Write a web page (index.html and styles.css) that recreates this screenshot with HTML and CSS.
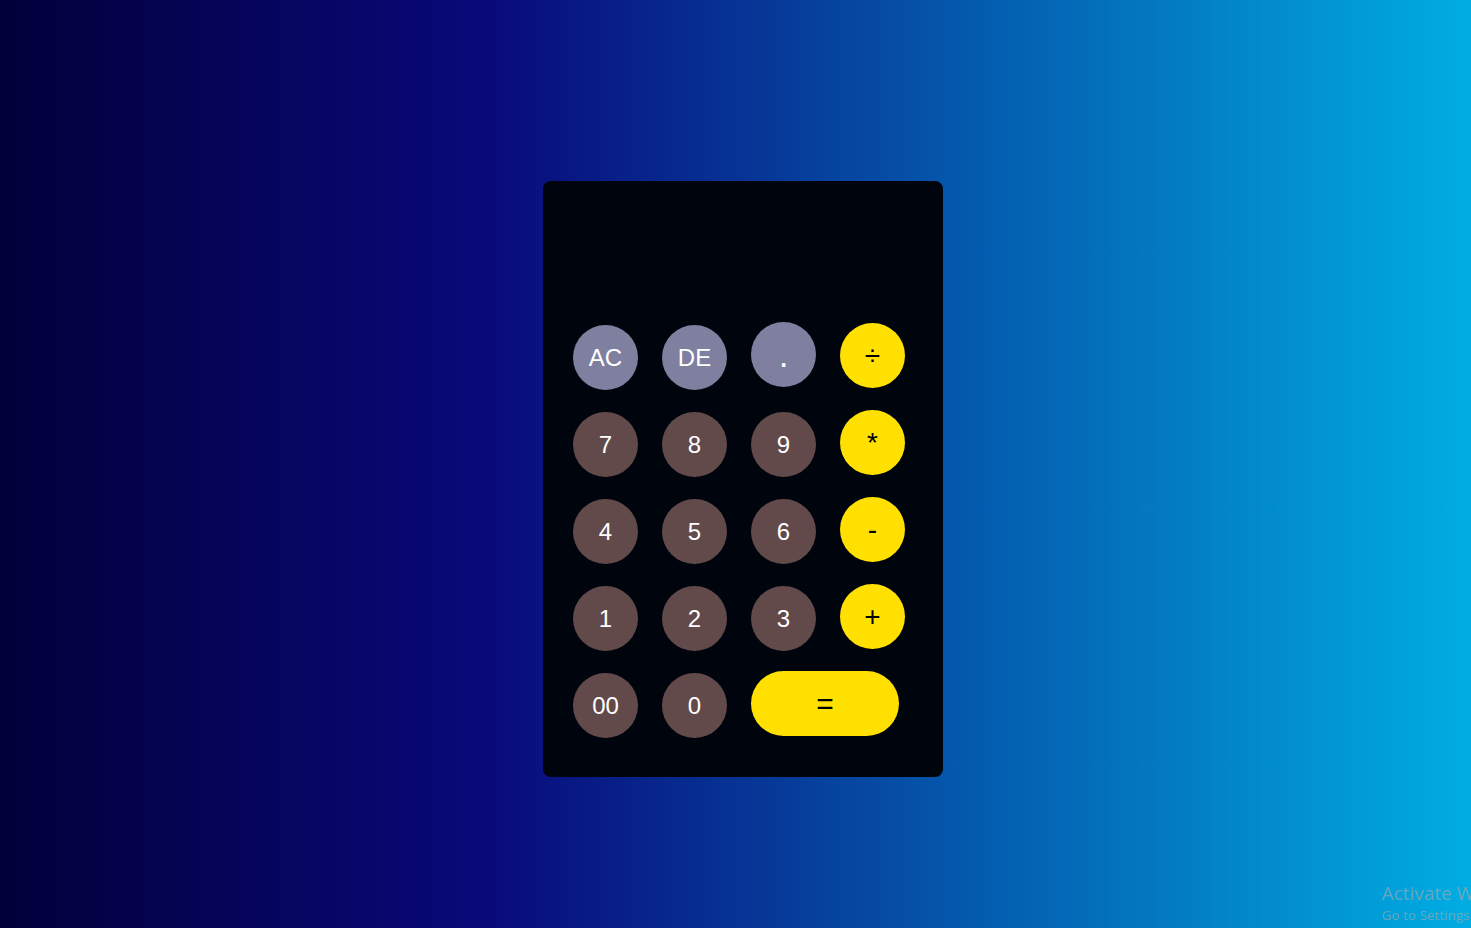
FILE: index.html
```html
<!DOCTYPE html>
<html lang="en">
<head>
<meta charset="utf-8">
<title>Calculator</title>
<link rel="stylesheet" href="styles.css">
</head>
<body>
  <div class="calculator">
    <div class="display"></div>
    <div class="keys">
      <button class="key fn">AC</button>
      <button class="key fn">DE</button>
      <button class="key fn dot">.</button>
      <button class="key op">÷</button>

      <button class="key num">7</button>
      <button class="key num">8</button>
      <button class="key num">9</button>
      <button class="key op">*</button>

      <button class="key num">4</button>
      <button class="key num">5</button>
      <button class="key num">6</button>
      <button class="key op">-</button>

      <button class="key num">1</button>
      <button class="key num">2</button>
      <button class="key num">3</button>
      <button class="key op">+</button>

      <button class="key num">00</button>
      <button class="key num">0</button>
      <button class="key op equal">=</button>
    </div>
  </div>
  <div class="watermark">
    <div class="wm-title">Activate Windows</div>
    <div class="wm-sub">Go to Settings to activate Windows.</div>
  </div>
</body>
</html>
```
FILE: styles.css
```css
html, body {
  margin: 0;
  padding: 0;
}

body {
  width: 100vw;
  height: 100vh;
  overflow: hidden;
  box-sizing: border-box;
  background: linear-gradient(to right, #02003a 0%, #09097a 33%, #00ade3 100%);
  display: flex;
  justify-content: center;
  align-items: flex-start;
  padding-top: 181px;
  padding-left: 15px;
  font-family: "Liberation Sans", Arial, sans-serif;
}

.calculator {
  width: 400px;
  height: 596px;
  box-sizing: border-box;
  background: #00040d;
  border-radius: 8px;
  padding: 0 38px 39px 30px;
  display: flex;
  flex-direction: column;
}

.display {
  height: 144px;
  flex: none;
}

.keys {
  display: grid;
  grid-template-columns: repeat(4, 65px);
  grid-auto-rows: 65px;
  column-gap: 24px;
  row-gap: 22px;
}

.key {
  width: 65px;
  height: 65px;
  border: none;
  border-radius: 50%;
  padding: 0;
  margin: 0;
  font-family: "Liberation Sans", Arial, sans-serif;
  font-size: 24px;
  line-height: 65px;
  text-align: center;
  cursor: pointer;
  align-self: start;
}

.fn {
  background: #7f7f9f;
  color: #ffffff;
}

.dot {
  margin-top: -3px;
  font-size: 35px;
}

.num {
  background: #624a4a;
  color: #ffffff;
}

.op {
  background: #ffe000;
  color: #000000;
  margin-top: -2px;
  font-size: 28px;
}

.equal {
  grid-column: span 2;
  width: 148px;
  border-radius: 33px;
  font-size: 30px;
}

.watermark {
  position: fixed;
  left: 1382px;
  top: 880px;
  white-space: nowrap;
  font-family: "Open Sans", "Noto Sans", sans-serif;
  color: rgba(170, 170, 170, 0.6);
}

.wm-title {
  font-size: 19px;
  line-height: 26px;
}

.wm-sub {
  font-size: 13.5px;
  line-height: 18px;
}
```
